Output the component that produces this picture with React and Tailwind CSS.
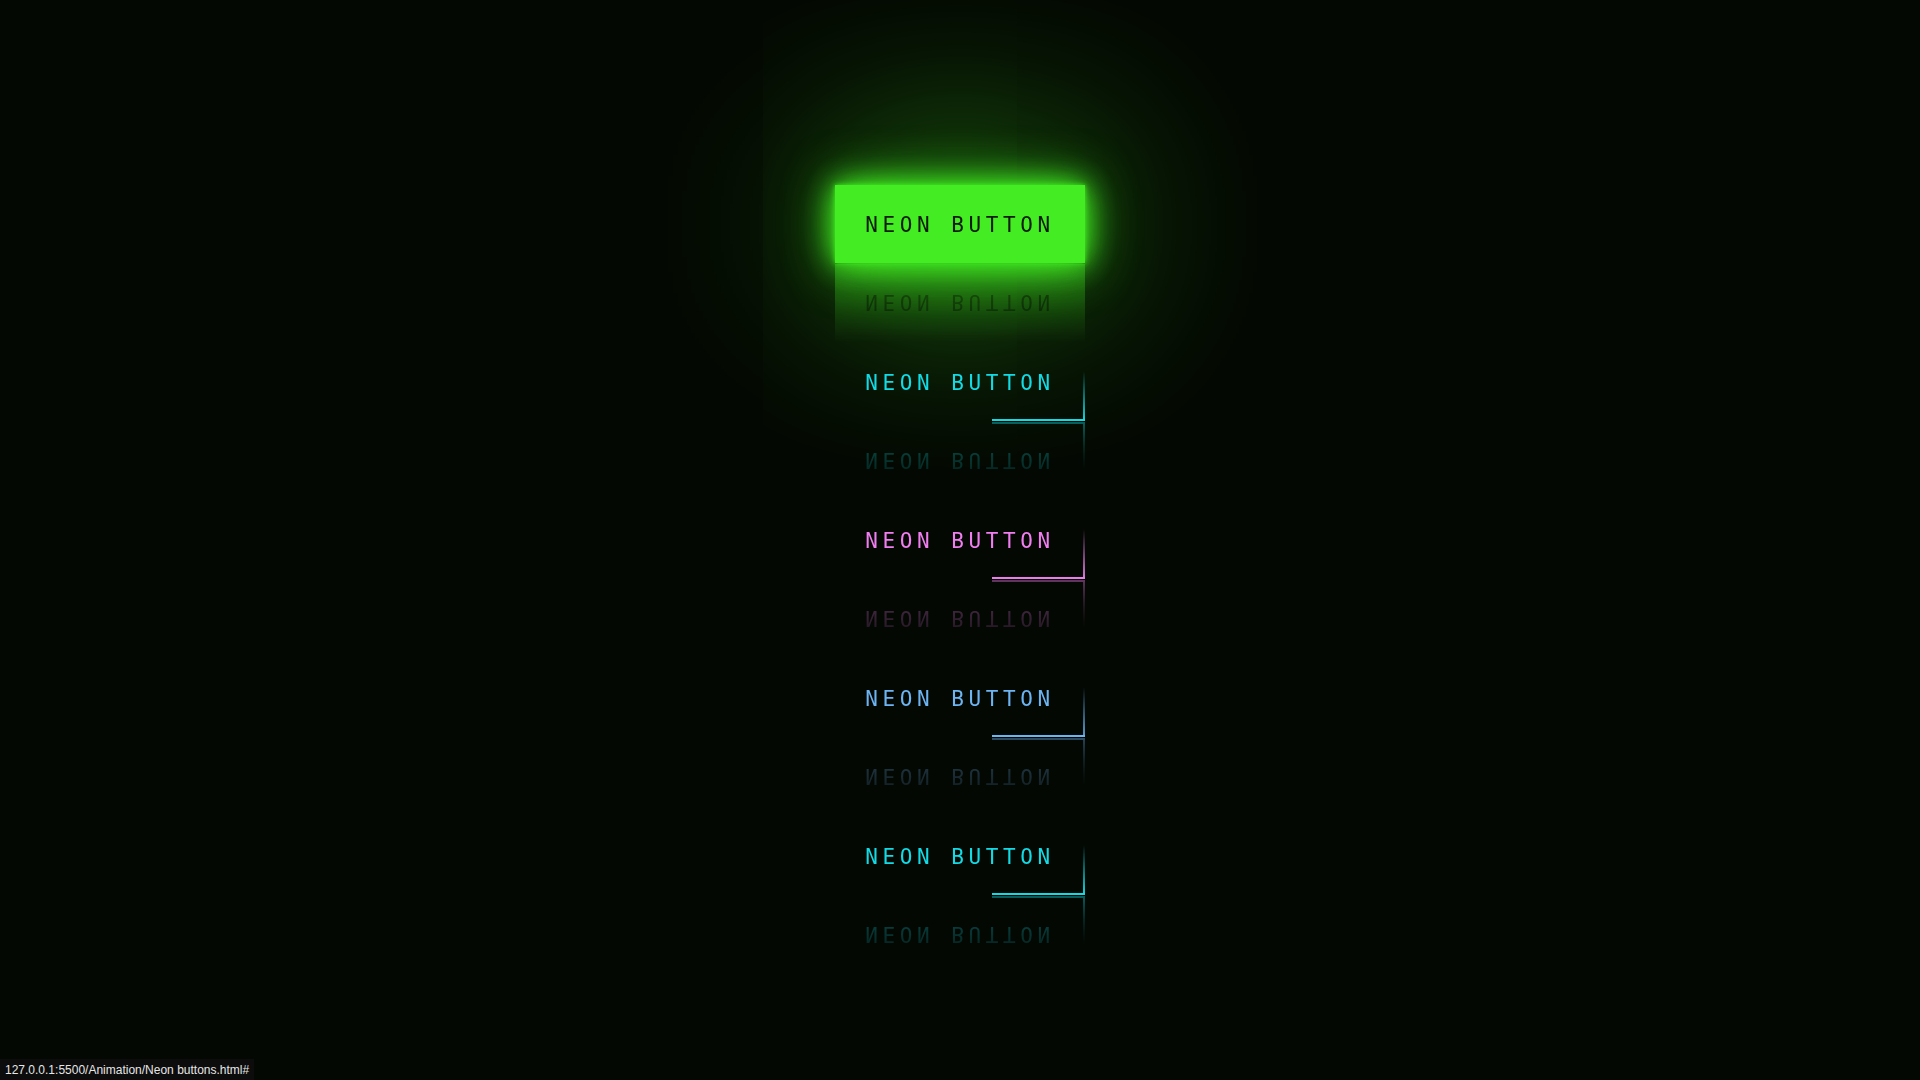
const BUTTONS = [
  { key: 'green', active: true },
  { key: 'cyan', text: 'text-[#12dbe6]', line: 'bg-[#12dbe6]', fade: 'from-transparent to-[#12dbe6]' },
  { key: 'pink', text: 'text-[#f07ef0]', line: 'bg-[#ec7cec]', fade: 'from-transparent to-[#e27ae2]' },
  { key: 'blue', text: 'text-[#6cb4f2]', line: 'bg-[#6cb4f2]', fade: 'from-transparent to-[#5c9ed6]' },
  { key: 'cyan2', text: 'text-[#12dbe6]', line: 'bg-[#12dbe6]', fade: 'from-transparent to-[#12dbe6]' },
]

function NeonButton({ b }) {
  if (b.active) {
    return (
      <a href="#"
        className="relative inline-block px-[30px] pt-[26px] pb-[24px] leading-[28px] text-[21px] tracking-[4.6px] text-[#0b1a06] bg-[#43ec23] shadow-[0_0_5px_#43ec23,0_0_25px_#43ec23,0_0_50px_#43ec23,0_0_200px_#43ec23] [-webkit-box-reflect:below_1px_linear-gradient(transparent,#0006)]"
        style={{ fontFamily: '"DejaVu Sans Mono", monospace' }}>
        NEON BUTTON
      </a>
    )
  }
  return (
    <a href="#"
      className={`relative inline-block overflow-hidden px-[30px] pt-[26px] pb-[24px] leading-[28px] text-[21px] tracking-[4.6px] ${b.text} [-webkit-box-reflect:below_1px_linear-gradient(transparent,#0006)]`}
      style={{ fontFamily: '"DejaVu Sans Mono", monospace' }}>
      NEON BUTTON
      {/* animated border pieces, frozen mid-run */}
      <span className={`absolute right-0 bottom-0 w-[2px] h-[50px] bg-gradient-to-b ${b.fade}`} />
      <span className={`absolute right-0 bottom-0 w-[93px] h-[2px] ${b.line}`} />
    </a>
  )
}

export default function App() {
  return (
    <div className="relative min-h-screen flex flex-col items-center justify-center gap-[80px] bg-[#040803] overflow-hidden">
      {BUTTONS.map(b => <NeonButton key={b.key} b={b} />)}

      {/* browser status bubble */}
      <div className="absolute left-0 bottom-0 h-[21px] px-[5px] flex items-center bg-[#0c0c0c] text-[#e6e6e6] text-[12px]"
        style={{ fontFamily: '"Liberation Sans", Arial, sans-serif' }}>
        127.0.0.1:5500/Animation/Neon buttons.html#
      </div>
    </div>
  )
}
